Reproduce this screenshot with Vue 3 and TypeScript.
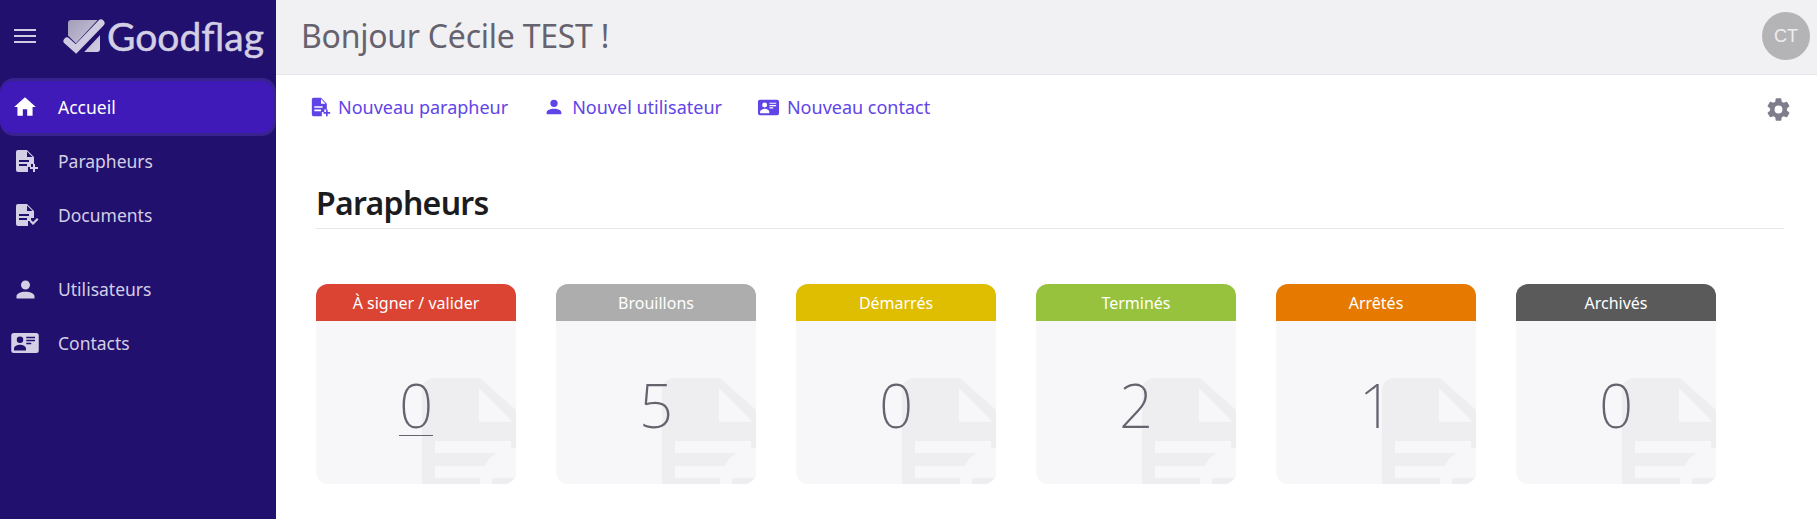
<script setup lang="ts">
const fileBody = 'M3 1H12L19 8V15H16V18H13V23H3A2 2 0 0 1 1 21V3A2 2 0 0 1 3 1ZM12 2.5V8H17.5ZM4 11V13H14V11ZM4 15V17H12V15Z'
const filePlus = 'M18 15H20V18H23V20H20V23H18V20H15V18H18Z'
const fileCheck = 'M14.5 18.5L16 17L18 19L22 15L23.5 16.5L18 22Z'
const account = 'M12 4A4 4 0 0 1 16 8A4 4 0 0 1 12 12A4 4 0 0 1 8 8A4 4 0 0 1 12 4M12 14C16.42 14 20 15.79 20 18V20H4V18C4 15.79 7.58 14 12 14Z'
const contact = 'M3 4H21A2 2 0 0 1 23 6V18A2 2 0 0 1 21 20H3A2 2 0 0 1 1 18V6A2 2 0 0 1 3 4ZM8 6.8A2.6 2.6 0 1 0 8 12A2.6 2.6 0 1 0 8 6.8ZM13 7V8.2H20V7ZM13 9.4V10.6H20V9.4ZM13 11.8V13H17V11.8ZM3.2 18H12.8V16.4C12.8 14.6 10 13.4 8 13.4C6 13.4 3.2 14.6 3.2 16.4Z'
const home = 'M10 20V14H14V20H19V12H22L12 3L2 12H5V20Z'

const nav = [
  { label: 'Accueil', icon: [home], size: 26, box: '0 0 24 24', active: true },
  { label: 'Parapheurs', icon: [fileBody, filePlus], size: 24, box: '-2 0 24 24' },
  { label: 'Documents', icon: [fileBody, fileCheck], size: 24, box: '-2 0 24 24', gap: true },
  { label: 'Utilisateurs', icon: [account], size: 27, box: '0 0 24 24' },
  { label: 'Contacts', icon: [contact], size: 30, box: '0 0 24 24' },
]
const actions = [
  { label: 'Nouveau parapheur', icon: [fileBody, filePlus], size: 20 },
  { label: 'Nouvel utilisateur', icon: [account], size: 22 },
  { label: 'Nouveau contact', icon: [contact], size: 23 },
]
const cards = [
  { label: 'À signer / valider', value: 0, color: '#db4332', link: true },
  { label: 'Brouillons', value: 5, color: '#adadad' },
  { label: 'Démarrés', value: 0, color: '#dfbd00' },
  { label: 'Terminés', value: 2, color: '#97c23d' },
  { label: 'Arrêtés', value: 1, color: '#e67a00' },
  { label: 'Archivés', value: 0, color: '#5a5a5a' },
]
</script>

<template>
  <div class="app">
    <aside class="sidebar">
      <div class="brand">
        <svg class="menu" viewBox="0 0 22 14" width="22" height="14"><path d="M0 0H22V2H0ZM0 6H22V8H0ZM0 12H22V14H0Z" /></svg>
        <svg class="mark" viewBox="0 0 44 36" width="44" height="36">
          <defs>
            <linearGradient id="gf" x1="0" y1="0" x2="1" y2="1">
              <stop offset="0" stop-color="#a39eb8" />
              <stop offset="1" stop-color="#d3cfe4" />
            </linearGradient>
          </defs>
          <rect x="6" y="2" width="32" height="32" rx="3" fill="url(#gf)" />
          <path d="M2 22L14 34L42 4" fill="none" stroke="#22106e" stroke-width="12" />
          <path d="M5 23L14 31L39 5" fill="none" stroke="#cfcbe0" stroke-width="7" stroke-linecap="round" />
        </svg>
        <span class="word">Goodflag</span>
      </div>
      <nav class="nav">
        <a v-for="n in nav" :key="n.label" class="nav-item" :class="{ active: n.active, gap: n.gap }">
          <span class="slot">
            <svg :viewBox="n.box" :width="n.size" :height="n.size"><path v-for="d in n.icon" :key="d" :d="d" fill-rule="evenodd" /></svg>
          </span>
          <span>{{ n.label }}</span>
        </a>
      </nav>
    </aside>
    <main class="main">
      <header class="top">
        <h1>Bonjour Cécile TEST !</h1>
        <div class="avatar">CT</div>
      </header>
      <div class="actions">
        <a v-for="a in actions" :key="a.label" class="action">
          <svg viewBox="0 0 24 24" :width="a.size" :height="a.size"><path v-for="d in a.icon" :key="d" :d="d" fill-rule="evenodd" /></svg>
          <span>{{ a.label }}</span>
        </a>
        <svg class="gear" viewBox="0 0 24 24" width="27" height="27"><path d="M12 15.5A3.5 3.5 0 0 1 8.5 12A3.5 3.5 0 0 1 12 8.5A3.5 3.5 0 0 1 15.5 12A3.5 3.5 0 0 1 12 15.5M19.43 12.97C19.47 12.65 19.5 12.33 19.5 12C19.5 11.67 19.47 11.34 19.43 11L21.54 9.37C21.73 9.22 21.78 8.95 21.66 8.73L19.66 5.27C19.54 5.05 19.27 4.96 19.05 5.05L16.56 6.05C16.04 5.66 15.5 5.32 14.87 5.07L14.5 2.42C14.46 2.18 14.25 2 14 2H10C9.75 2 9.54 2.18 9.5 2.42L9.13 5.07C8.5 5.32 7.96 5.66 7.44 6.05L4.95 5.05C4.73 4.96 4.46 5.05 4.34 5.27L2.34 8.73C2.21 8.95 2.27 9.22 2.46 9.37L4.57 11C4.53 11.34 4.5 11.67 4.5 12C4.5 12.33 4.53 12.65 4.57 12.97L2.46 14.63C2.27 14.78 2.21 15.05 2.34 15.27L4.34 18.73C4.46 18.95 4.73 19.03 4.95 18.95L7.44 17.94C7.96 18.34 8.5 18.68 9.13 18.93L9.5 21.58C9.54 21.82 9.75 22 10 22H14C14.25 22 14.46 21.82 14.5 21.58L14.87 18.93C15.5 18.67 16.04 18.34 16.56 17.94L19.05 18.95C19.27 19.03 19.54 18.95 19.66 18.73L21.66 15.27C21.78 15.05 21.73 14.78 21.54 14.63L19.43 12.97Z" /></svg>
      </div>
      <section class="content">
        <h2>Parapheurs</h2>
        <div class="cards">
          <article v-for="c in cards" :key="c.label" class="card">
            <div class="card-head" :style="{ background: c.color }">{{ c.label }}</div>
            <div class="card-body">
              <svg class="mark-bg" viewBox="0 0 94 106" width="94" height="106">
                <path d="M12 0H58L94 32V106H0V12A12 12 0 0 1 12 0Z" fill="#eeeef0" />
                <path d="M57 10V44H91ZM13 63V75H89V63ZM13 88V100H58V106H70V100H94V70H89V75H75Q66 80 63 88Z" fill="#f7f7f9" />
              </svg>
              <span class="value" :class="{ link: c.link }">{{ c.value }}</span>
            </div>
          </article>
        </div>
      </section>
    </main>
  </div>
</template>

<style>
html, body { margin: 0; background: #fff; }
</style>

<style scoped>
.app { display: flex; height: 519px; overflow: hidden; font-family: "Noto Sans", "Open Sans", sans-serif; }
.sidebar { width: 276px; flex: none; background: #22106e; }
.brand { height: 75px; display: flex; align-items: center; box-sizing: border-box; padding: 0 0 3px 14px; }
.menu { fill: #cfcbe0; }
.mark { margin-left: 26px; flex: none; }
.word { margin-left: 1px; font: 400 39px/1 "Lato", sans-serif; color: #d3cfe4; -webkit-text-stroke: .5px #d3cfe4; }
.nav { display: flex; flex-direction: column; padding-top: 3px; }
.nav-item { display: flex; align-items: center; height: 54px; color: #d3cfe4; font-size: 17.5px; box-sizing: border-box; padding-left: 10px; position: relative; top: -2px; }
.slot { width: 30px; height: 30px; flex: none; display: flex; align-items: center; justify-content: center; }
.slot svg { fill: currentColor; flex: none; overflow: visible; }
.slot + span { margin-left: 18px; }
.nav-item.active { height: 58px; top: 0; color: #fff; background: #3f1ab8; border: 3px solid #38228e; border-left: 0; border-radius: 14px; }
.nav-item.gap { margin-bottom: 20px; }
.main { flex: 1; min-width: 0; display: flex; flex-direction: column; }
.top { height: 75px; box-sizing: border-box; background: #f1f1f4; border-bottom: 1px solid #e6e6ea; display: flex; align-items: center; justify-content: space-between; padding: 0 7px 3px 25px; }
.top h1 { margin: 0; font-size: 32px; font-weight: 400; color: #66626e; letter-spacing: -.25px; }
.avatar { width: 48px; height: 48px; border-radius: 50%; background: #b4b4b7; color: #eee; font: 18px/48px "Liberation Sans", sans-serif; text-align: center; }
.actions { display: flex; align-items: center; height: 64px; padding: 0 25px 0 35px; gap: 35px; }
.action { display: flex; align-items: center; color: #5f45e8; font-size: 18px; }
.action svg { fill: currentColor; margin-right: 7px; overflow: visible; }
.gear { margin-left: auto; margin-top: 4px; fill: #7f7d8c; }
.content { padding: 42px 33px 0 40px; }
.content h2 { margin: 0 0 55px; font-size: 32px; line-height: 44px; font-weight: 600; color: #1c1c1e; letter-spacing: -.7px; border-bottom: 1px solid #e6e6ea; padding-bottom: 3px; }
.cards { display: flex; gap: 40px; }
.card { width: 200px; height: 200px; border-radius: 12px; overflow: hidden; background: #f7f7f9; display: flex; flex-direction: column; }
.card-head { height: 37px; flex: none; color: #fff; font-size: 16px; display: flex; align-items: center; justify-content: center; }
.card-body { flex: 1; position: relative; display: flex; justify-content: center; }
.mark-bg { position: absolute; left: 106px; top: 57px; }
.value { position: relative; margin-top: 52px; height: 62px; font: 200 60px/64px "Noto Sans", sans-serif; color: #66626e; }
.value.link { border-bottom: 1px solid #66626e; }
</style>
